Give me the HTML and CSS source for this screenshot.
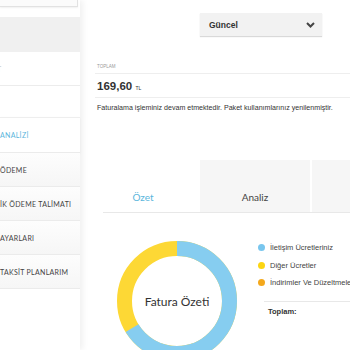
FILE: index.html
```html
<!DOCTYPE html>
<html lang="tr">
<head>
<meta charset="utf-8">
<title>Fatura</title>
<link rel="stylesheet" href="styles.css">
</head>
<body>
<div class="page">
  <aside class="sidebar">
    <div class="search"><div class="search-box"></div></div>
    <div class="band"></div>
    <div class="side-row top-row"><span class="cut">T</span></div>
    <div class="side-space"></div>
    <nav class="menu">
      <div class="menu-item active">ANALİZİ</div>
      <div class="menu-item">ÖDEME</div>
      <div class="menu-item">İK ÖDEME TALİMATI</div>
      <div class="menu-item">AYARLARI</div>
      <div class="menu-item">TAKSİT PLANLARIM</div>
    </nav>
  </aside>
  <main class="main">
    <div class="toolbar">
      <div class="select">
        <span class="select-label">Güncel</span>
        <svg class="chev" width="9" height="6" viewBox="0 0 9 6"><path d="M1 1 L4.5 4.5 L8 1" fill="none" stroke="#444" stroke-width="2"/></svg>
      </div>
    </div>
    <div class="summary">
      <div class="sum-label">TOPLAM</div>
      <div class="sum-amount">169,60 <span class="cur">TL</span></div>
      <div class="sum-msg">Faturalama işleminiz devam etmektedir. Paket kullanımlarınız yenilenmiştir.</div>
    </div>
    <div class="tabs">
      <div class="tab active">Özet</div>
      <div class="tab">Analiz</div>
      <div class="tab"></div>
    </div>
    <div class="chart-area">
      <div class="donut">
        <svg width="120" height="120" viewBox="0 0 120 120">
          <circle cx="60" cy="60" r="52.5" fill="none" stroke="#fdd835" stroke-width="15"/>
          <circle cx="60" cy="60" r="52.5" fill="none" stroke="#86cdf0" stroke-width="15" stroke-dasharray="218.5 400" transform="rotate(-90 60 60)"/>
        </svg>
        <div class="donut-label">Fatura Özeti</div>
      </div>
      <div class="legend">
        <div class="leg-item"><span class="dot blue"></span>İletişim Ücretleriniz</div>
        <div class="leg-item"><span class="dot yellow"></span>Diğer Ücretler</div>
        <div class="leg-item"><span class="dot orange"></span>İndirimler Ve Düzeltmeler</div>
        <div class="leg-total">Toplam:</div>
      </div>
    </div>
  </main>
</div>
</body>
</html>
```
FILE: styles.css
```css
html, body {
  margin: 0;
  padding: 0;
  background: #fff;
}
body {
  width: 350px;
  height: 350px;
  overflow: hidden;
  font-family: "Liberation Sans", Arial, sans-serif;
  color: #333;
}
.page {
  display: flex;
  gap: 8px;
  height: 350px;
}
.sidebar {
  width: 80px;
  flex: none;
  background: #fff;
  box-shadow: 3px 0 6px rgba(0, 0, 0, 0.06);
  display: flex;
  flex-direction: column;
  font-family: Lato, "Liberation Sans", sans-serif;
}
.sidebar > * {
  flex: none;
}
.search {
  height: 17px;
}
.search-box {
  height: 6px;
  margin-right: 2px;
  background: #fbfbfb;
  border: 1px solid #e2e2e2;
  border-top: none;
  border-left: none;
  box-shadow: 0 1px 2px rgba(0, 0, 0, 0.06);
}
.band {
  height: 35px;
  background: #f0f0f0;
}
.side-row {
  height: 33px;
  border-bottom: 1px solid #ececec;
  display: flex;
  align-items: center;
  overflow: hidden;
}
.cut {
  font-size: 7px;
  color: #ccc;
  margin-left: -3px;
}
.side-space {
  height: 31px;
}
.menu {
  display: flex;
  flex-direction: column;
}
.menu-item {
  flex: none;
  height: 33px;
  display: flex;
  align-items: center;
  font-size: 7px;
  letter-spacing: 0.3px;
  color: #444;
  background: linear-gradient(#fdfdfd, #f6f6f6);
  border-bottom: 1px solid #ebebeb;
  white-space: nowrap;
  overflow: hidden;
}
.menu-item.active {
  height: 34px;
  color: #5ab6dc;
  background: #fff;
  border-top: 1px solid #eeeeee;
  box-shadow: 0 1px 2px rgba(0, 0, 0, 0.06);
}
.main {
  flex: 1;
  min-width: 0;
  display: flex;
  flex-direction: column;
}
.main > * {
  flex: none;
}
.toolbar {
  height: 50px;
  padding-top: 13px;
  box-sizing: border-box;
  padding-left: 112px;
}
.select {
  width: 122px;
  height: 23px;
  box-sizing: border-box;
  background: #f2f2f2;
  box-shadow: 0 1px 1px rgba(0, 0, 0, 0.15);
  display: flex;
  align-items: center;
  justify-content: space-between;
  padding: 0 7px 0 9px;
}
.select-label {
  font-size: 8.5px;
  font-weight: bold;
  color: #333;
}
.chev {
  display: block;
}
.summary {
  margin-left: 7px;
  width: 400px;
}
.sum-label {
  height: 24px;
  box-sizing: border-box;
  padding: 14px 0 0 2px;
  font-size: 4.5px;
  color: #999;
  border-bottom: 1px solid #eeeeee;
}
.sum-amount {
  height: 24px;
  box-sizing: border-box;
  padding: 6px 0 0 2px;
  font-size: 11.5px;
  font-weight: bold;
  color: #333;
  border-bottom: 1px solid #eeeeee;
}
.cur {
  font-size: 5px;
  font-weight: normal;
}
.sum-msg {
  height: 14px;
  box-sizing: border-box;
  padding: 6px 0 0 2px;
  font-size: 7.1px;
  color: #333;
  white-space: nowrap;
}
.tabs {
  margin-top: 48px;
  height: 53px;
  display: flex;
  gap: 2px;
  font-family: Lato, "Liberation Sans", sans-serif;
  position: relative;
}
.tabs::after {
  content: "";
  position: absolute;
  left: 15px;
  right: -100px;
  bottom: 0;
  height: 1px;
  background: #e8e8e8;
}
.tab {
  width: 110px;
  flex: none;
  background: #f6f6f6;
  display: flex;
  align-items: flex-end;
  justify-content: center;
  padding-bottom: 10px;
  box-sizing: border-box;
  font-size: 10px;
  color: #444;
}
.tab.active {
  background: #fff;
  color: #5ab6dc;
}
.chart-area {
  display: flex;
  padding-top: 28px;
}
.donut {
  margin-left: 29px;
  width: 120px;
  height: 120px;
  position: relative;
  flex: none;
}
.donut svg {
  display: block;
}
.donut-label {
  position: absolute;
  inset: 0;
  display: flex;
  align-items: center;
  justify-content: center;
  font-family: Lato, "Liberation Sans", sans-serif;
  font-size: 12px;
  color: #333;
}
.legend {
  margin-left: 21px;
  margin-top: -2px;
  display: flex;
  flex-direction: column;
}
.leg-item {
  display: flex;
  align-items: center;
  height: 17.5px;
  font-size: 7.5px;
  color: #444;
  white-space: nowrap;
}
.dot {
  width: 7px;
  height: 7px;
  border-radius: 50%;
  margin-right: 5px;
  flex: none;
}
.dot.blue { background: #79c6ee; }
.dot.yellow { background: #fcd512; }
.dot.orange { background: #f4a81c; }
.leg-total {
  margin-left: 6px;
  margin-top: 9px;
  border-top: 1px solid #e8e8e8;
  width: 200px;
  padding: 5px 0 0 4px;
  font-size: 7.5px;
  font-weight: bold;
  color: #333;
}
```
